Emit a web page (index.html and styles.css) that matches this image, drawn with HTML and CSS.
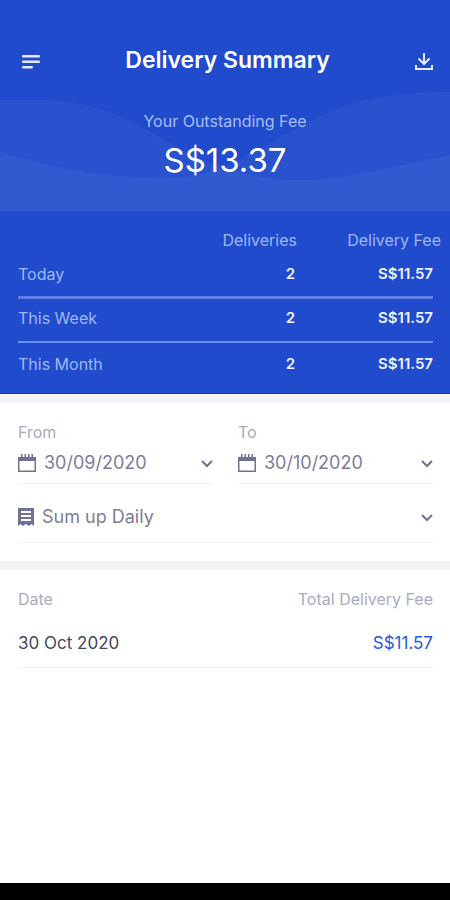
FILE: index.html
```html
<!DOCTYPE html>
<html lang="en">
<head>
<meta charset="utf-8">
<meta name="viewport" content="width=device-width, initial-scale=1">
<title>Delivery Summary</title>
<link rel="stylesheet" href="styles.css">
</head>
<body>
<div class="app">
  <header class="top-bar">
    <button class="icon-button" type="button" aria-label="Menu">
      <svg width="20" height="20" viewBox="0 0 20 20" fill="currentColor"><rect x="1" y="5" width="18" height="2.500" rx="1"/><rect x="1" y="10.500" width="18" height="2.500" rx="1"/><rect x="1" y="16" width="11" height="2.500" rx="1"/></svg>
    </button>
    <h1 class="title">Delivery Summary</h1>
    <button class="icon-button" type="button" aria-label="Download">
      <svg width="20" height="20" viewBox="0 0 20 20" fill="none" stroke="currentColor" stroke-width="2"><path d="M10 3v11M4.500 8.500l5.500 5.500L15.500 8.500M2 15v4h16v-4"/></svg>
    </button>
  </header>
  <section class="hero">
    <svg class="waves" viewBox="0 0 450 129" preserveAspectRatio="none" aria-hidden="true">
      <path d="M0 18H45C100 20 130 38 165 58C205 82 250 98 300 98C350 97 385 86 450 73V129H0Z"/>
      <path d="M0 70C50 84 100 96 160 96C215 97 240 77 270 61C320 34 350 10 450 10V129H0Z"/>
    </svg>
    <p class="hero-label">Your Outstanding Fee</p>
    <p class="hero-amount">S$13.37</p>
  </section>
  <section class="totals">
    <table class="totals-table">
      <thead>
        <tr><td></td><th scope="col">Deliveries</th><th scope="col"><span class="fee-heading">Delivery Fee</span></th></tr>
      </thead>
      <tbody>
        <tr><th scope="row">Today</th><td class="count">2</td><td>S$11.57</td></tr>
        <tr><th scope="row">This Week</th><td class="count">2</td><td>S$11.57</td></tr>
        <tr><th scope="row">This Month</th><td class="count">2</td><td>S$11.57</td></tr>
      </tbody>
    </table>
  </section>
  <form class="filters">
    <div class="field">
      <label class="field-label" for="from">From</label>
      <div class="control">
        <svg width="18" height="18" viewBox="0 0 18 18" fill="currentColor"><path fill-rule="evenodd" d="M0 3H3V0H4.500V3H6.500V0H8V3H10V0H11.500V3H13.500V0H15V3H18V18H0ZM1.500 7V16.500H16.500V7Z"/></svg>
        <select id="from"><option>30/09/2020</option></select>
        <svg class="chevron" width="12" height="12" viewBox="0 0 12 12"><path d="M1 4l5 5 5-5"/></svg>
      </div>
    </div>
    <div class="field">
      <label class="field-label" for="to">To</label>
      <div class="control">
        <svg width="18" height="18" viewBox="0 0 18 18" fill="currentColor"><path fill-rule="evenodd" d="M0 3H3V0H4.500V3H6.500V0H8V3H10V0H11.500V3H13.500V0H15V3H18V18H0ZM1.500 7V16.500H16.500V7Z"/></svg>
        <select id="to"><option>30/10/2020</option></select>
        <svg class="chevron" width="12" height="12" viewBox="0 0 12 12"><path d="M1 4l5 5 5-5"/></svg>
      </div>
    </div>
    <div class="control grouping">
      <svg width="16" height="18" viewBox="0 0 16 18" fill="currentColor"><path fill-rule="evenodd" d="M0 0H16V18L13.500 16L11 18L8 16L5 18L2.500 16L0 18ZM3 3V5H13V3ZM3 7V9H13V7ZM3 11V13H13V11Z"/></svg>
      <select aria-label="Grouping"><option>Sum up Daily</option></select>
      <svg class="chevron" width="12" height="12" viewBox="0 0 12 12"><path d="M1 4l5 5 5-5"/></svg>
    </div>
  </form>
  <main class="history">
    <table class="history-table">
      <thead><tr><th scope="col">Date</th><th scope="col">Total Delivery Fee</th></tr></thead>
      <tbody><tr><td>30 Oct 2020</td><td class="fee">S$11.57</td></tr></tbody>
    </table>
  </main>
  <div class="system-bar"></div>
</div>
</body>
</html>
```
FILE: styles.css
```css
* { box-sizing: border-box; }

body {
  margin: 0;
  background: #fff;
  color: #45475e;
  font-family: Inter, "Open Sans", sans-serif;
  font-size: 16px;
  line-height: 22px;
}

.app {
  display: flex;
  flex-direction: column;
  min-height: 100vh;
}

svg { display: block; flex: none; }

/* Header */
.top-bar {
  display: flex;
  align-items: center;
  justify-content: space-between;
  padding: 38px 16px 0 21px;
  background: #1f4bcc;
  color: #fff;
}

.icon-button {
  display: flex;
  padding: 0;
  border: 0;
  background: none;
  color: #e6ecff;
}

.title {
  margin: 0;
  font-size: 23px;
  font-weight: 600;
  line-height: 44px;
}

.hero {
  position: relative;
  padding: 28px 16px 29px;
  background: #1f4bcc;
  text-align: center;
}

.waves {
  position: absolute;
  inset: 0;
  width: 100%;
  height: 100%;
  fill: rgba(255, 255, 255, 0.045);
}

.hero-label,
.hero-amount {
  position: relative;
  margin: 0;
}

.hero-label { color: #a9bdfa; }

.hero-amount {
  margin-top: 6px;
  color: #fff;
  font-size: 33px;
  line-height: 44px;
}

/* Totals */
.totals {
  padding: 17px 17px 6px 18px;
  background: #1f4bcc;
  border-bottom: 1px solid #0c38bd;
  color: #eef2ff;
}

table {
  width: 100%;
  border-collapse: collapse;
}

th, td {
  padding: 0;
  font-weight: 400;
  text-align: right;
  white-space: nowrap;
}

.totals-table th { color: #a0b7fb; }
.totals-table thead th { line-height: 24px; }
.totals-table thead th:nth-child(2) { width: 160px; }
.totals-table thead th:nth-child(3) { width: 136px; }
.totals-table tbody th { text-align: left; }
.totals-table tbody tr { height: 45px; }
.totals-table tbody tr:not(:last-child) { border-bottom: 2px solid #6c8cee; }
.totals-table tbody tr:first-child { border-bottom: 3px solid #5c80e6; }
.totals-table tbody tr:not(:first-child) > * { padding-bottom: 3px; }

.totals-table tbody td {
  font-size: 15px;
  font-weight: 600;
}

.totals-table tbody .count { padding-right: 2px; }
.fee-heading { display: block; margin-right: -8px; }

/* Filters */
.filters {
  display: grid;
  grid-template-columns: 1fr 1fr;
  column-gap: 25px;
  padding: 18px 17px 18px 18px;
  border-top: 9px solid #f3f3f8;
  border-bottom: 9px solid #f1f2f5;
}

.field-label {
  display: block;
  color: #a9abc0;
}

.control {
  display: flex;
  align-items: center;
  gap: 8px;
  height: 41px;
  border-bottom: 1px solid #f1f1f5;
  color: #6f7195;
}

.control select {
  flex: 1;
  min-width: 0;
  padding: 0;
  border: 0;
  appearance: none;
  background: none;
  color: #7c7e98;
  font: inherit;
  font-size: 18px;
}

.chevron {
  fill: none;
  stroke: currentColor;
  stroke-width: 2;
}

.grouping {
  grid-column: 1 / -1;
  height: 51px;
  margin-top: 8px;
}

/* History */
.history {
  flex: 1;
  padding: 10px 17px 0 18px;
}

.history-table th {
  height: 38px;
  color: #a9abc0;
}

.history-table th:first-child,
.history-table td:first-child { text-align: left; }

.history-table td {
  height: 49px;
  padding-top: 2px;
  border-bottom: 1px solid #f3f3f6;
  font-size: 17px;
}

.history-table .fee { color: #2857dc; }

.system-bar {
  height: 17px;
  background: #000;
}
```
